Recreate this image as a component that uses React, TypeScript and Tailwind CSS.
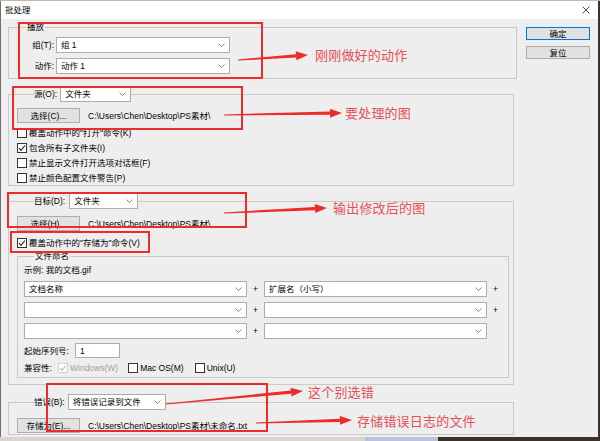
import type { ReactNode } from 'react'

// 批处理 dialog (Photoshop), scaled-down screenshot with red annotations on top

function Chevron() {
  return (
    <svg width="7" height="4" viewBox="0 0 7 4" className="shrink-0">
      <polyline points="0.5,0.5 3.5,3.5 6.5,0.5" fill="none" stroke="#858585" strokeWidth="1" />
    </svg>
  )
}

function Select({ value, className }: { value?: string; className: string }) {
  return (
    <div className={`h-[16px] shrink-0 bg-white border border-[#adadad] flex items-center justify-between pl-[4px] pr-[4px] ${className}`}>
      <span className="truncate">{value}</span>
      <Chevron />
    </div>
  )
}

function Btn({ children, className = '' }: { children: ReactNode; className?: string }) {
  return (
    <div className={`h-[15px] shrink-0 bg-[#e1e1e1] border border-[#adadad] flex items-center justify-center ${className}`}>
      {children}
    </div>
  )
}

function Box({ checked, disabled }: { checked?: boolean; disabled?: boolean }) {
  return (
    <span className={`w-[10px] h-[10px] shrink-0 flex items-center justify-center bg-white border ${disabled ? 'border-[#d2d2d2]' : 'border-[#333333]'}`}>
      {checked && (
        <svg width="8" height="8" viewBox="0 0 8 8">
          <polyline points="1,4.2 3,6.3 7,1.5" fill="none" stroke={disabled ? '#b8b8b8' : '#222'} strokeWidth="1.1" />
        </svg>
      )}
    </span>
  )
}

function Check({ label, checked, disabled }: { label: string; checked?: boolean; disabled?: boolean }) {
  return (
    <div className="h-[15px] flex items-center gap-[2px]">
      <Box checked={checked} disabled={disabled} />
      <span className={disabled ? 'text-[#a0a0a0]' : ''}>{label}</span>
    </div>
  )
}

function PathRow({ btn, path }: { btn: string; path: string }) {
  return (
    <div className="flex items-center">
      <Btn className="w-[63px]">{btn}</Btn>
      <span className="ml-[8px]">{path}</span>
    </div>
  )
}

const RED = '#ee2b2b'

function Arrow({ x1, y1, x2, y2 }: { x1: number; y1: number; x2: number; y2: number }) {
  const dx = x2 - x1, dy = y2 - y1
  const len = Math.hypot(dx, dy)
  const ux = dx / len, uy = dy / len
  const hl = 12, hw = 4.5
  const bx = x2 - ux * hl, by = y2 - uy * hl
  const head = `${x2},${y2} ${bx - uy * hw},${by + ux * hw} ${bx + uy * hw},${by - ux * hw}`
  const shaft = `${x1 - uy * 0.6},${y1 + ux * 0.6} ${bx - uy * 1.6},${by + ux * 1.6} ${bx + uy * 1.6},${by - ux * 1.6} ${x1 + uy * 0.6},${y1 - ux * 0.6}`
  return (
    <g fill={RED}>
      <polygon points={shaft} />
      <polygon points={head} />
    </g>
  )
}

const boxes = [
  { k: 'a', c: 'left-[18px] top-[22px] w-[245px] h-[57px]' },
  { k: 'b', c: 'left-[12px] top-[86px] w-[231px] h-[44px]' },
  { k: 'c', c: 'left-[7px] top-[192px] w-[240px] h-[36px]' },
  { k: 'd', c: 'left-[10px] top-[231px] w-[140px] h-[22px]' },
  { k: 'e', c: 'left-[46px] top-[383px] w-[222px] h-[49px]' },
]

const notes = [
  { t: '刚刚做好的动作', c: 'left-[315px] top-[48px]' },
  { t: '要处理的图', c: 'left-[345px] top-[106px]' },
  { t: '输出修改后的图', c: 'left-[333px] top-[201px]' },
  { t: '这个别选错', c: 'left-[308px] top-[385px]' },
  { t: '存储错误日志的文件', c: 'left-[357px] top-[414px]' },
]

export default function App() {
  return (
    <div className="relative w-[600px] h-[441px] overflow-hidden flex flex-col bg-[#3c3129] font-['Liberation_Sans','Noto_Sans_CJK_SC',sans-serif] text-[8.5px] leading-[12px] text-black">
      <div className="h-[1px] bg-[#c8b6a3]" />
      <div className="flex flex-1">
        <div className="w-[598px] h-[436px] flex flex-col bg-[#eeeeee] border-l border-[#6f6f6f]">
          {/* 标题栏 */}
          <div className="h-[18px] bg-white flex items-center justify-between pl-[4px] pr-[8px]">
            <span>批处理</span>
            <svg width="8" height="8" viewBox="0 0 8 8">
              <path d="M0.5 0.5 L7.5 7.5 M7.5 0.5 L0.5 7.5" stroke="#333" strokeWidth="0.9" />
            </svg>
          </div>

          <div className="flex flex-1">
            <div className="pl-[7px] flex flex-col">
              {/* 播放 */}
              <fieldset className="min-w-0 w-[509px] mt-[2px] border border-[#c9c9c9] pl-[8px] pt-[4px] pb-[4px]">
                <legend className="ml-[9px] px-[1px] leading-[12px]">播放</legend>
                <div className="flex flex-col gap-[5px]">
                  <div className="flex items-center">
                    <span className="w-[37px] text-right">组(T):</span>
                    <Select value="组 1" className="ml-[2px] w-[174px]" />
                  </div>
                  <div className="flex items-center">
                    <span className="w-[37px] text-right">动作:</span>
                    <Select value="动作 1" className="ml-[2px] w-[174px]" />
                  </div>
                </div>
              </fieldset>

              {/* 源 */}
              <fieldset className="min-w-0 w-[506px] mt-[7px] border border-[#c9c9c9] pl-[8px] pt-[6px]">
                <legend className="ml-[17px] h-[16px] flex items-center">
                  <span>源(O):</span>
                  <Select value="文件夹" className="ml-[3px] w-[71px]" />
                </legend>
                <PathRow btn="选择(C)..." path="C:\Users\Chen\Desktop\PS素材\" />
                <div className="mt-[2px] flex flex-col">
                  <Check label={'覆盖动作中的"打开"命令(K)'} />
                  <Check label="包含所有子文件夹(I)" checked />
                  <Check label="禁止显示文件打开选项对话框(F)" />
                  <Check label="禁止颜色配置文件警告(P)" />
                </div>
              </fieldset>

              {/* 目标 */}
              <fieldset className="min-w-0 w-[506px] mt-[7px] border border-[#c9c9c9] pl-[8px] pr-[4px] pt-[7px] pb-[6px]">
                <legend className="ml-[17px] h-[16px] flex items-center">
                  <span>目标(D):</span>
                  <Select value="文件夹" className="ml-[4px] w-[69px]" />
                </legend>
                <PathRow btn="选择(H)..." path="C:\Users\Chen\Desktop\PS素材\" />
                <div className="mt-[5px] h-[14px] flex items-center gap-[2px]">
                  <Box checked />
                  <span>覆盖动作中的"存储为"命令(V)</span>
                </div>

                {/* 文件命名 */}
                <fieldset className="min-w-0 border border-[#c9c9c9] pl-[6px] pt-[2px] pb-[2px]">
                  <legend className="ml-[10px] px-[1px] leading-[12px]">文件命名</legend>
                  <div className="h-[12px] flex items-center">示例: 我的文档.gif</div>
                  <div className="mt-[5px] flex flex-col gap-[5px]">
                    <div className="flex items-center">
                      <Select value="文档名称" className="w-[223px]" />
                      <span className="w-[17px] text-center">+</span>
                      <Select value="扩展名（小写）" className="w-[223px]" />
                      <span className="w-[17px] text-center">+</span>
                    </div>
                    <div className="flex items-center">
                      <Select className="w-[223px]" />
                      <span className="w-[17px] text-center">+</span>
                      <Select className="w-[223px]" />
                      <span className="w-[17px] text-center">+</span>
                    </div>
                    <div className="flex items-center">
                      <Select className="w-[223px]" />
                      <span className="w-[17px] text-center">+</span>
                      <Select className="w-[223px]" />
                    </div>
                  </div>
                  <div className="mt-[4px] h-[15px] flex items-center">
                    <span className="w-[51px]">起始序列号:</span>
                    <div className="w-[45px] h-[15px] bg-white border border-[#adadad] flex items-center pl-[4px]">1</div>
                  </div>
                  <div className="mt-[3px] h-[14px] flex items-center">
                    <span className="w-[34px]">兼容性:</span>
                    <Check label="Windows(W)" checked disabled />
                    <div className="ml-[10px]"><Check label="Mac OS(M)" /></div>
                    <div className="ml-[11px]"><Check label="Unix(U)" /></div>
                  </div>
                </fieldset>
              </fieldset>

              {/* 错误 */}
              <fieldset className="min-w-0 w-[506px] mt-[9px] border border-[#c9c9c9] pl-[8px] pt-[8px] pb-[1px]">
                <legend className="ml-[17px] h-[16px] flex items-center">
                  <span>错误(B):</span>
                  <Select value="将错误记录到文件" className="ml-[3px] w-[98px]" />
                </legend>
                <PathRow btn="存储为(E)..." path="C:\Users\Chen\Desktop\PS素材\未命名.txt" />
              </fieldset>
            </div>

            {/* 右侧按钮 */}
            <div className="pl-[9px] pt-[8px] flex flex-col gap-[6px]">
              <div className="w-[64px] h-[13px] bg-[#e1e1e1] border border-[#0078d7] flex items-center justify-center">确定</div>
              <div className="w-[64px] h-[13px] bg-[#e1e1e1] border border-[#adadad] flex items-center justify-center">复位</div>
            </div>
          </div>
        </div>
        <div className="flex-1 bg-[#3c3129]" />
      </div>
      <div className="h-[4px] flex">
        <div className="w-[365px] bg-[#d9d4ce]" />
        <div className="w-[73px] bg-[#b9c4da]" />
        <div className="flex-1 bg-[#3c3129]" />
      </div>

      {/* 标注 */}
      {boxes.map(b => (
        <div key={b.k} className={`absolute border-2 border-[#ee2b2b] pointer-events-none ${b.c}`} />
      ))}
      <svg className="absolute left-0 top-0 pointer-events-none" width="600" height="441">
        <Arrow x1={238} y1={60} x2={308} y2={55} />
        <Arrow x1={224} y1={115} x2={342} y2={113} />
        <Arrow x1={224} y1={213} x2={327} y2={208} />
        <Arrow x1={166} y1={404} x2={303} y2={391} />
        <Arrow x1={256} y1={423} x2={352} y2={420} />
      </svg>
      {notes.map(n => (
        <span key={n.t} className={`absolute text-[13px] leading-[13px] tracking-[0.2px] text-[#e3505a] font-['Noto_Sans_CJK_SC',sans-serif] ${n.c}`}>{n.t}</span>
      ))}
    </div>
  )
}
